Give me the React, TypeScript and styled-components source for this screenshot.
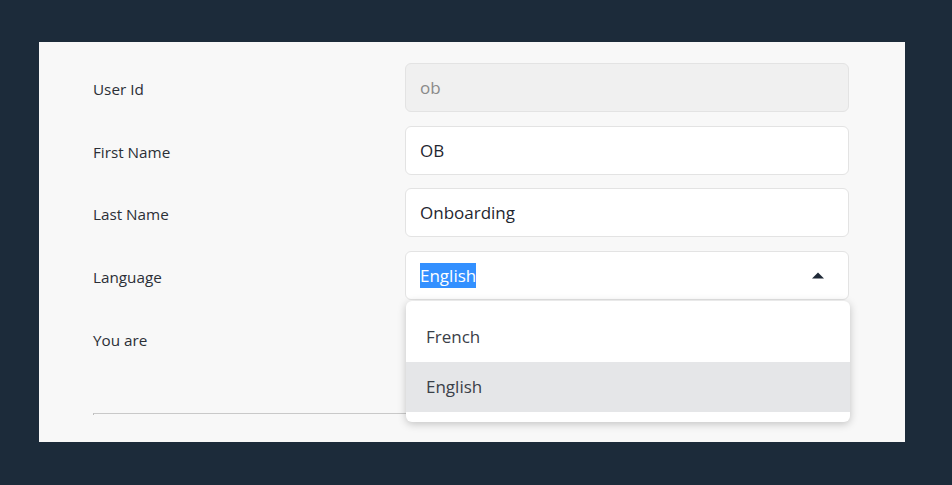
import styled, { createGlobalStyle } from "styled-components";

const GlobalStyle = createGlobalStyle`
	html, body {
		margin: 0;
		padding: 0;
		background: #1c2b3a;
		font-family: "Open Sans", "Noto Sans", sans-serif;
	}
`;

interface Field {
	label: string;
	value: string;
	disabled?: boolean;
}

const FIELDS: Field[] = [
	{ label: "User Id", value: "ob", disabled: true },
	{ label: "First Name", value: "OB" },
	{ label: "Last Name", value: "Onboarding" },
];

const LANGUAGES = ["French", "English"];

export default function App() {
	return (
		<>
			<GlobalStyle />
			<Card>
				<Form>
					{FIELDS.map((field) => (
						<Row key={field.label}>
							<Label>{field.label}</Label>
							<Input $disabled={field.disabled}>{field.value}</Input>
						</Row>
					))}

					<Row>
						<Label>Language</Label>
						<SelectWrap>
							<Select>
								<Selected>English</Selected>
								<svg width="12" height="7" viewBox="0 0 12 7">
									<path d="M0 6.5 L6 0.5 L12 6.5 Z" fill="#1f2937" />
								</svg>
							</Select>
							<Menu>
								{LANGUAGES.map((lang) => (
									<MenuItem key={lang} $active={lang === "English"}>
										{lang}
									</MenuItem>
								))}
							</Menu>
						</SelectWrap>
					</Row>

					<Row>
						<Label>You are</Label>
					</Row>

					<Divider />
				</Form>
			</Card>
		</>
	);
}

const Card = styled.div`
	margin: 42px 0 0 39px;
	width: 866px;
	height: 400px;
	background: #f8f8f8;
	box-sizing: border-box;
`;

const Form = styled.div`
	display: flex;
	flex-direction: column;
	gap: 13.67px;
	padding: 21px 56px 0 54px;
`;

const Row = styled.div`
	display: grid;
	grid-template-columns: 312px 444px;
	align-items: center;
	height: 49px;
`;

const Label = styled.span`
	font-size: 15.25px;
	color: #2b2f36;
	padding-top: 3px;
`;

const Input = styled.div<{ $disabled?: boolean }>`
	box-sizing: border-box;
	height: 49px;
	display: flex;
	align-items: center;
	padding: 0 14px;
	border: 1px solid #e3e3e3;
	border-radius: 6px;
	background: ${(p) => (p.$disabled ? "#f0f0f0" : "#ffffff")};
	color: ${(p) => (p.$disabled ? "#8a8a8a" : "#1f2630")};
	font-size: 17px;
`;

const SelectWrap = styled.div`
	position: relative;
`;

const Select = styled(Input)`
	justify-content: space-between;
	padding-right: 24px;

	svg {
		display: block;
	}
`;

const Selected = styled.span`
	background: #3390ff;
	color: #ffffff;
	line-height: 25px;
`;

const Menu = styled.div`
	position: absolute;
	top: 50px;
	left: 1px;
	width: 444px;
	padding: 11px 0 10px;
	background: #ffffff;
	border-radius: 6px;
	box-shadow: 0 2px 8px rgba(0, 0, 0, 0.22);
	z-index: 2;
`;

const MenuItem = styled.div<{ $active?: boolean }>`
	height: 50px;
	display: flex;
	align-items: center;
	padding-left: 20px;
	font-size: 17px;
	color: #3a4048;
	background: ${(p) => (p.$active ? "#e5e6e8" : "transparent")};
`;

const Divider = styled.div`
	margin-top: 37px;
	height: 2px;
	width: 600px;
	border-top: 1px solid #c9c9c9;
	border-left: 1px solid #bdbdbd;
	box-sizing: border-box;
`;
